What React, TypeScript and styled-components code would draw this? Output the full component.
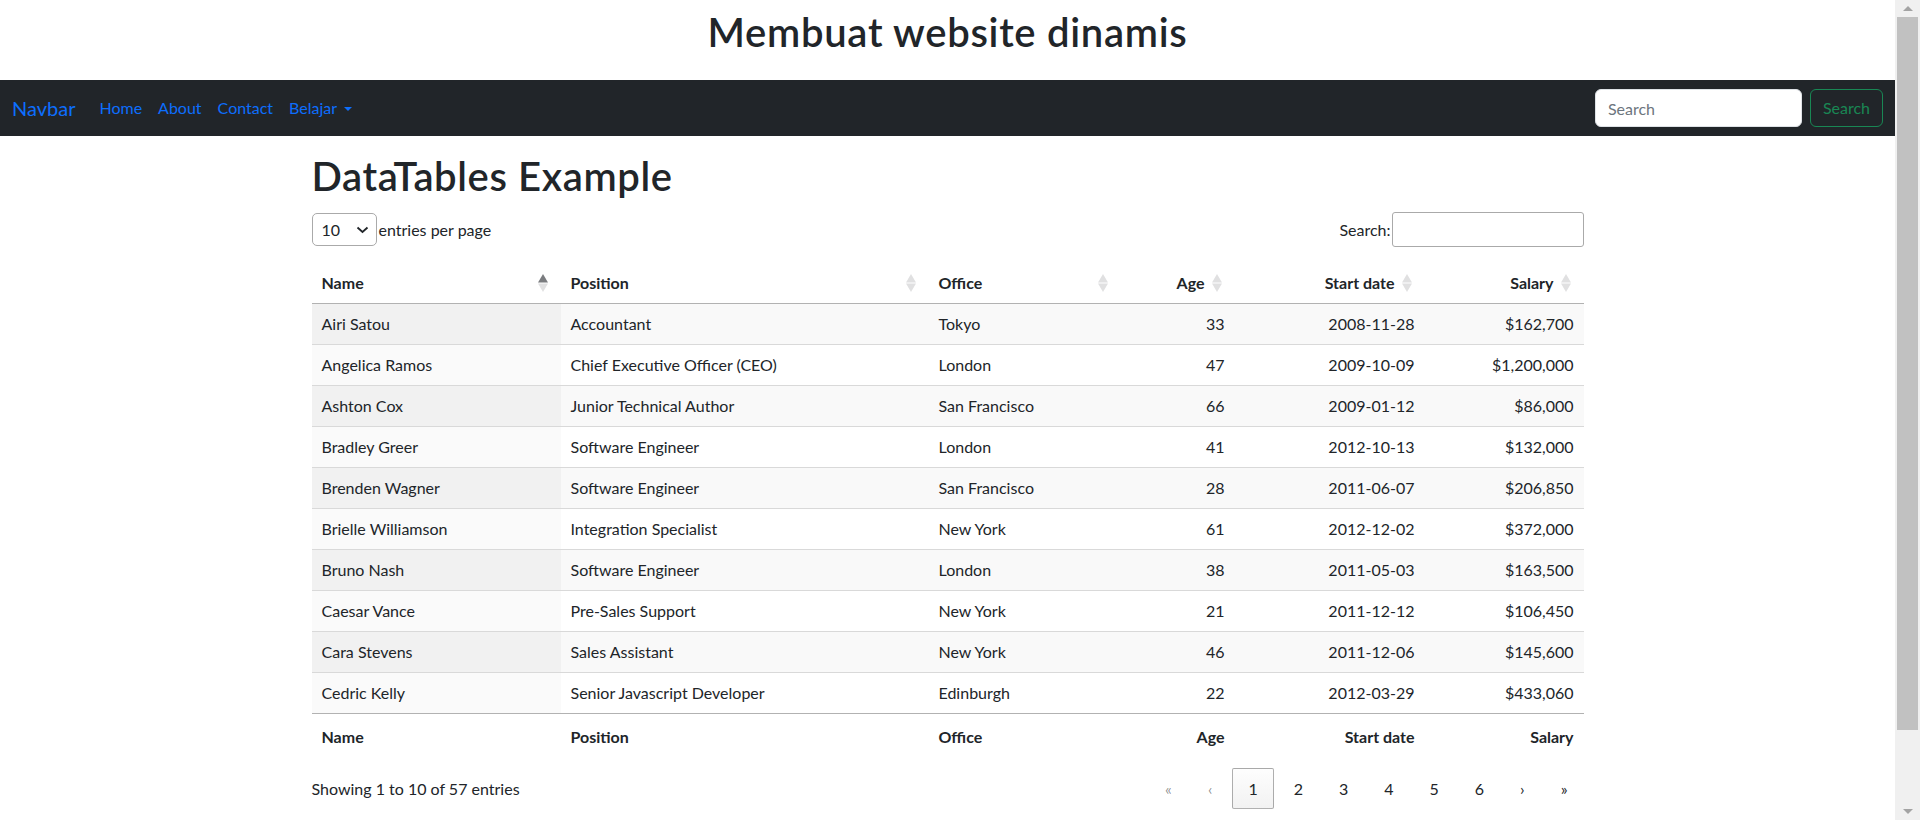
import React from "react";
import styled, { createGlobalStyle } from "styled-components";

const GlobalStyle = createGlobalStyle`
  *, *::before, *::after { box-sizing: border-box; }
  body {
    margin: 0;
    font-family: "Lato", "Liberation Sans", sans-serif;
    font-size: 16px;
    line-height: 1.5;
    color: #212529;
    background: #fff;
  }
`;

const Shell = styled.div`
  display: flex;
  align-items: flex-start;
`;

const Page = styled.div`
  flex: 1;
  min-width: 0;
`;

const ScrollRail = styled.aside`
  position: sticky;
  top: 0;
  width: 25px;
  height: 820px;
  flex-shrink: 0;
  background: #f0f0f0;
  display: flex;
  flex-direction: column;
`;

const ScrollArrow = styled.div`
  height: 17px;
  display: flex;
  align-items: center;
  justify-content: center;
`;

const ScrollTrack = styled.div`
  flex: 1;
  padding: 0 2px;
`;

const ScrollThumb = styled.div`
  height: 713px;
  background: #c1c1c1;
`;

const PageHeader = styled.header`
  padding: 8px 0 24px;
  text-align: center;
`;

const MainTitle = styled.h1`
  margin: 0;
  font-size: 40px;
  line-height: 48px;
  font-weight: 600;
  letter-spacing: 0.7px;
  color: #212529;
`;

const NavBar = styled.nav`
  background: #212529;
  height: 56px;
  padding: 8px 12px;
  display: flex;
  align-items: center;
`;

const Brand = styled.a`
  color: #0d6efd;
  font-size: 20px;
  line-height: 30px;
  padding: 5px 0;
  margin-right: 16px;
  text-decoration: none;
`;

const NavList = styled.ul`
  list-style: none;
  margin: 0;
  padding: 0;
  display: flex;
`;

const NavLink = styled.a`
  display: flex;
  align-items: center;
  padding: 8px;
  color: #0d6efd;
  text-decoration: none;
  line-height: 24px;
`;

const Caret = styled.span`
  display: inline-block;
  margin-left: 0.4em;
  margin-top: 2px;
  border-top: 0.3em solid #0d6efd;
  border-left: 0.3em solid transparent;
  border-right: 0.3em solid transparent;
`;

const SearchForm = styled.form`
  margin-left: auto;
  display: flex;
  gap: 8px;
`;

const NavInput = styled.input`
  width: 207px;
  height: 38px;
  padding: 6px 12px;
  font: inherit;
  font-size: 16px;
  color: #212529;
  border: 1px solid #dee2e6;
  border-radius: 6px;
  background: #fff;
  &::placeholder { color: #6c757d; }
`;

const OutlineButton = styled.button`
  height: 38px;
  padding: 6px 12px;
  font: inherit;
  font-size: 16px;
  color: #198754;
  background: transparent;
  border: 1px solid #198754;
  border-radius: 6px;
`;

const Container = styled.main`
  width: 1272px;
  margin: 0 auto;
  padding: 16px 0 82px;
`;

const PageTitle = styled.h1`
  margin: 0 0 12px;
  font-size: 40px;
  line-height: 48px;
  font-weight: 600;
  letter-spacing: 0.6px;
`;

const ControlsRow = styled.div`
  display: flex;
  justify-content: space-between;
  align-items: center;
  height: 35px;
  margin-bottom: 16px;
`;

const LengthLabel = styled.label`
  display: flex;
  align-items: center;
  gap: 2px;
`;

const SelectBox = styled.span`
  display: inline-flex;
  align-items: center;
  width: 65px;
  height: 33px;
  padding: 0 7px 0 9px;
  border: 1px solid #aaa;
  border-radius: 5px;
  background: #fff;
  justify-content: space-between;
`;

const NativeSelect = styled.select`
  appearance: none;
  border: none;
  background: transparent;
  font: inherit;
  color: #212529;
  padding: 0;
  outline: none;
  width: 30px;
`;

const SearchLabel = styled.label`
  display: flex;
  align-items: center;
  gap: 1px;
`;

const SearchInput = styled.input`
  width: 192px;
  height: 35px;
  border: 1px solid #aaa;
  border-radius: 3px;
  padding: 4px;
  font: inherit;
`;

const Table = styled.table`
  width: 1272px;
  table-layout: fixed;
  border-collapse: separate;
  border-spacing: 0;
`;

const HeadCell = styled.th<{ $numeric?: boolean }>`
  padding: 8px 12px 8px 10px;
  font-weight: 700;
  text-align: ${(p) => (p.$numeric ? "right" : "left")};
  border-bottom: 1px solid rgba(0, 0, 0, 0.3);
  line-height: 24px;
`;

const HeadInner = styled.div<{ $numeric?: boolean }>`
  display: flex;
  align-items: center;
  justify-content: ${(p) => (p.$numeric ? "flex-end" : "space-between")};
  gap: 6px;
`;

const OrderIcon = styled.span`
  display: flex;
  justify-content: center;
  width: 12px;
`;

const BodyRow = styled.tr<{ $odd: boolean }>`
  &:not(:first-child) > td { border-top: 1px solid rgba(0, 0, 0, 0.15); }
  & > td {
    box-shadow: inset 0 0 0 9999px ${(p) => (p.$odd ? "rgba(0,0,0,0.023)" : "transparent")};
  }
  & > td:first-child {
    box-shadow: inset 0 0 0 9999px ${(p) => (p.$odd ? "rgba(0,0,0,0.054)" : "rgba(0,0,0,0.019)")};
  }
`;

const Cell = styled.td<{ $numeric?: boolean }>`
  padding: 8px 10px;
  line-height: 24px;
  text-align: ${(p) => (p.$numeric ? "right" : "left")};
  white-space: nowrap;
`;

const FootCell = styled.th<{ $numeric?: boolean }>`
  padding: 11px 10px 6px;
  line-height: 24px;
  font-weight: 700;
  text-align: ${(p) => (p.$numeric ? "right" : "left")};
  border-top: 1px solid rgba(0, 0, 0, 0.3);
`;

const BottomRow = styled.div`
  display: flex;
  justify-content: space-between;
  align-items: center;
  margin-top: 13px;
`;

const Info = styled.div`
  line-height: 24px;
`;

const Paging = styled.nav`
  display: flex;
  gap: 4px;
`;

const PageButton = styled.button<{ $current?: boolean; $disabled?: boolean }>`
  font: inherit;
  font-size: 16px;
  line-height: 23px;
  padding: 8px 15px;
  border-radius: 2px;
  border: 1px solid ${(p) => (p.$current ? "rgba(0,0,0,0.3)" : "transparent")};
  background: ${(p) =>
    p.$current
      ? "linear-gradient(to bottom, rgba(230,230,230,0.05) 0%, rgba(0,0,0,0.05) 100%)"
      : "transparent"};
  color: ${(p) => (p.$disabled ? "rgba(0,0,0,0.45)" : "#212529")};
  cursor: pointer;
`;

type Row = [string, string, string, string, string, string];

const rows: Row[] = [
  ["Airi Satou", "Accountant", "Tokyo", "33", "2008-11-28", "$162,700"],
  ["Angelica Ramos", "Chief Executive Officer (CEO)", "London", "47", "2009-10-09", "$1,200,000"],
  ["Ashton Cox", "Junior Technical Author", "San Francisco", "66", "2009-01-12", "$86,000"],
  ["Bradley Greer", "Software Engineer", "London", "41", "2012-10-13", "$132,000"],
  ["Brenden Wagner", "Software Engineer", "San Francisco", "28", "2011-06-07", "$206,850"],
  ["Brielle Williamson", "Integration Specialist", "New York", "61", "2012-12-02", "$372,000"],
  ["Bruno Nash", "Software Engineer", "London", "38", "2011-05-03", "$163,500"],
  ["Caesar Vance", "Pre-Sales Support", "New York", "21", "2011-12-12", "$106,450"],
  ["Cara Stevens", "Sales Assistant", "New York", "46", "2011-12-06", "$145,600"],
  ["Cedric Kelly", "Senior Javascript Developer", "Edinburgh", "22", "2012-03-29", "$433,060"],
];

const columns = [
  { title: "Name", width: 249, numeric: false },
  { title: "Position", width: 368, numeric: false },
  { title: "Office", width: 192, numeric: false },
  { title: "Age", width: 114, numeric: true },
  { title: "Start date", width: 190, numeric: true },
  { title: "Salary", width: 159, numeric: true },
];

const SortIcon: React.FC<{ asc?: boolean }> = ({ asc }) => (
  <svg width="10" height="18" viewBox="0 0 10 18">
    <polygon points="5,0 10,8.5 0,8.5" fill={asc ? "#7a7c7f" : "#e0e0e1"} />
    <polygon points="0,9.5 10,9.5 5,18" fill="#e0e0e1" />
  </svg>
);

const Chevron = () => (
  <svg width="13" height="8" viewBox="0 0 13 8">
    <polyline points="1.5,1.5 6.5,6 11.5,1.5" fill="none" stroke="#212529" strokeWidth="1.8" />
  </svg>
);

const ArrowGlyph: React.FC<{ down?: boolean }> = ({ down }) => (
  <svg width="10" height="6" viewBox="0 0 10 6">
    <polygon points={down ? "0,0 10,0 5,5" : "5,0 10,5 0,5"} fill="#a3a3a3" />
  </svg>
);

export default function App() {
  const pages = ["«", "‹", "1", "2", "3", "4", "5", "6", "›", "»"];
  return (
    <Shell>
      <GlobalStyle />
      <Page>
        <PageHeader>
          <MainTitle>Membuat website dinamis</MainTitle>
        </PageHeader>
        <NavBar>
          <Brand href="#">Navbar</Brand>
          <NavList>
            <li><NavLink href="#">Home</NavLink></li>
            <li><NavLink href="#">About</NavLink></li>
            <li><NavLink href="#">Contact</NavLink></li>
            <li>
              <NavLink href="#">
                Belajar
                <Caret />
              </NavLink>
            </li>
          </NavList>
          <SearchForm onSubmit={(e) => e.preventDefault()}>
            <NavInput type="search" placeholder="Search" aria-label="Search" />
            <OutlineButton type="submit">Search</OutlineButton>
          </SearchForm>
        </NavBar>
        <Container>
          <PageTitle>DataTables Example</PageTitle>
          <ControlsRow>
            <LengthLabel>
              <SelectBox>
                <NativeSelect defaultValue="10">
                  <option value="10">10</option>
                  <option value="25">25</option>
                  <option value="50">50</option>
                  <option value="100">100</option>
                </NativeSelect>
                <Chevron />
              </SelectBox>
              entries per page
            </LengthLabel>
            <SearchLabel>
              Search:
              <SearchInput type="search" />
            </SearchLabel>
          </ControlsRow>
          <Table>
            <colgroup>
              {columns.map((c) => (
                <col key={c.title} style={{ width: c.width }} />
              ))}
            </colgroup>
            <thead>
              <tr>
                {columns.map((c, i) => (
                  <HeadCell key={c.title} $numeric={c.numeric}>
                    <HeadInner $numeric={c.numeric}>
                      <span>{c.title}</span>
                      <OrderIcon>
                        <SortIcon asc={i === 0} />
                      </OrderIcon>
                    </HeadInner>
                  </HeadCell>
                ))}
              </tr>
            </thead>
            <tbody>
              {rows.map((r, ri) => (
                <BodyRow key={r[0]} $odd={ri % 2 === 0}>
                  {r.map((v, ci) => (
                    <Cell key={ci} $numeric={columns[ci].numeric}>
                      {v}
                    </Cell>
                  ))}
                </BodyRow>
              ))}
            </tbody>
            <tfoot>
              <tr>
                {columns.map((c) => (
                  <FootCell key={c.title} $numeric={c.numeric}>
                    {c.title}
                  </FootCell>
                ))}
              </tr>
            </tfoot>
          </Table>
          <BottomRow>
            <Info>Showing 1 to 10 of 57 entries</Info>
            <Paging>
              {pages.map((p, i) => (
                <PageButton key={i} $current={p === "1"} $disabled={i < 2}>
                  {p}
                </PageButton>
              ))}
            </Paging>
          </BottomRow>
        </Container>
      </Page>
      <ScrollRail aria-hidden="true">
        <ScrollArrow>
          <ArrowGlyph />
        </ScrollArrow>
        <ScrollTrack>
          <ScrollThumb />
        </ScrollTrack>
        <ScrollArrow>
          <ArrowGlyph down />
        </ScrollArrow>
      </ScrollRail>
    </Shell>
  );
}
